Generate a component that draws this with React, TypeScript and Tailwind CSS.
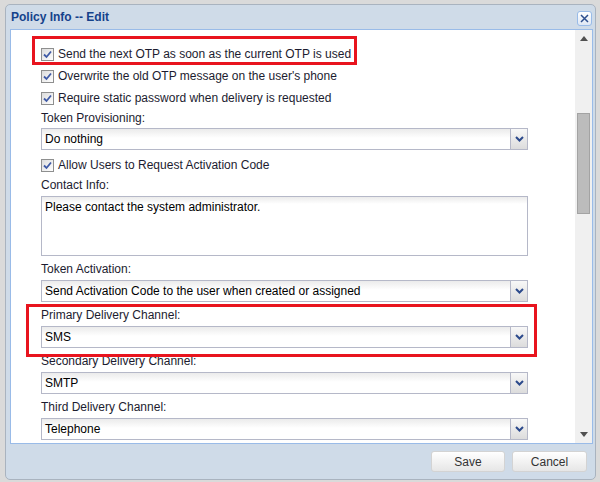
import React from "react";

const FONT = { fontFamily: '"Liberation Sans", Arial, sans-serif' };

function CheckBox() {
  return (
    <span className="flex h-[13px] w-[13px] shrink-0 items-center justify-center border border-[#8e8f8f] bg-gradient-to-br from-[#dcdcdc] to-white">
      <svg width="9" height="9" viewBox="0 0 9 9">
        <path d="M1 4.5 L3.5 7 L8 1.5" fill="none" stroke="#3f5aa6" strokeWidth="1.8" />
      </svg>
    </span>
  );
}

function CheckRow({ label }: { label: string }) {
  return (
    <div className="flex h-[22px] items-center gap-[4px]">
      <CheckBox />
      <span className="text-[12px] text-[#1c1c30]">{label}</span>
    </div>
  );
}

function FieldLabel({ children }: { children: React.ReactNode }) {
  return (
    <div className="mt-[4px] flex h-[18px] items-center text-[12px] text-[#1c1c30]">
      {children}
    </div>
  );
}

function Select({ value }: { value: string }) {
  return (
    <div className="mt-[2px] flex h-[22px] w-[487px] border border-[#b5b8c8] bg-gradient-to-b from-[#ebebeb] via-white via-[45%] to-white">
      <div className="flex flex-1 items-center pl-[3px] text-[12px] text-black">
        {value}
      </div>
      <div className="flex w-[17px] items-center justify-center border-l border-[#b5b8c8] bg-gradient-to-b from-[#f8f8f8] to-[#dcdcdc]">
        <svg width="9" height="6" viewBox="0 0 9 6">
          <path d="M1 1 L4.5 4.5 L8 1" fill="none" stroke="#2c4a8c" strokeWidth="2" />
        </svg>
      </div>
    </div>
  );
}

function Button({ label, width }: { label: string; width: string }) {
  return (
    <div
      className={`flex h-[21px] ${width} items-center justify-center rounded-[3px] border border-[#d3d3d3] bg-gradient-to-b from-white to-[#e6e6e6] text-[12px] text-[#333]`}
    >
      {label}
    </div>
  );
}

export default function App() {
  return (
    <div className="h-[482px] w-[600px] overflow-hidden bg-[#dadada] pl-[5px] pt-[4px]" style={FONT}>
      <div className="flex h-[476px] w-[591px] flex-col rounded-[5px] border border-[#a9b3bf] bg-[#cfdbe8]">
        {/* header */}
        <div className="flex h-[24px] items-center justify-between pl-[5px] pr-[3px]">
          <span className="text-[12px] font-bold text-[#15428b]">Policy Info -- Edit</span>
          <span className="mt-[2px] flex h-[15px] w-[15px] items-center justify-center rounded-[3px] border border-[#99bbe8] bg-gradient-to-b from-white to-[#dfe8f5]">
            <svg width="9" height="9" viewBox="0 0 9 9">
              <path d="M1 1 L8 8 M8 1 L1 8" stroke="#2d4f8e" strokeWidth="1.5" />
            </svg>
          </span>
        </div>

        {/* body */}
        <div className="ml-[4px] flex h-[415px] w-[583px] border border-[#99bbe8] bg-white">
          <div className="relative flex-1 overflow-hidden pl-[30px] pt-[13px]">
            <CheckRow label="Send the next OTP as soon as the current OTP is used" />
            <CheckRow label="Overwrite the old OTP message on the user's phone" />
            <CheckRow label="Require static password when delivery is requested" />
            <div className="flex h-[17px] items-center text-[12px] text-[#1c1c30]">Token Provisioning:</div>
            <Select value="Do nothing" />
            <div className="mt-[4px]">
              <CheckRow label="Allow Users to Request Activation Code" />
            </div>
            <div className="flex h-[18px] items-center text-[12px] text-[#1c1c30]">Contact Info:</div>
            <div className="mt-[2px] h-[60px] w-[487px] border border-[#b5b8c8] bg-gradient-to-b from-[#ebebeb] via-white via-[12%] to-white pl-[3px] pt-[1px] text-[12px] text-black">
              Please contact the system administrator.
            </div>
            <FieldLabel>Token Activation:</FieldLabel>
            <Select value="Send Activation Code to the user when created or assigned" />
            <FieldLabel>Primary Delivery Channel:</FieldLabel>
            <Select value="SMS" />
            <FieldLabel>Secondary Delivery Channel:</FieldLabel>
            <Select value="SMTP" />
            <FieldLabel>Third Delivery Channel:</FieldLabel>
            <Select value="Telephone" />

            {/* red annotation boxes */}
            <div className="absolute left-[21px] top-[6px] h-[29px] w-[325px] border-[3px] border-[#e8141e]" />
            <div className="absolute left-[15px] top-[274px] h-[53px] w-[511px] border-[3px] border-[#e8141e]" />
          </div>

          {/* scrollbar */}
          <div className="flex w-[17px] flex-col items-center bg-[#f0f0f0]">
            <div className="flex h-[17px] items-center justify-center">
              <svg width="8" height="5" viewBox="0 0 8 5">
                <path d="M0 5 L4 0 L8 5 Z" fill="#505050" />
              </svg>
            </div>
            <div className="mt-[66px] h-[101px] w-[13px] border border-[#a3a3a3] bg-[#bcbcbc]" />
            <div className="mt-auto flex h-[17px] items-center justify-center">
              <svg width="8" height="5" viewBox="0 0 8 5">
                <path d="M0 0 L8 0 L4 5 Z" fill="#505050" />
              </svg>
            </div>
          </div>
        </div>

        {/* footer */}
        <div className="flex flex-1 items-start justify-end gap-[7px] pr-[8px] pt-[7px]">
          <Button label="Save" width="w-[74px]" />
          <Button label="Cancel" width="w-[75px]" />
        </div>
      </div>
    </div>
  );
}
